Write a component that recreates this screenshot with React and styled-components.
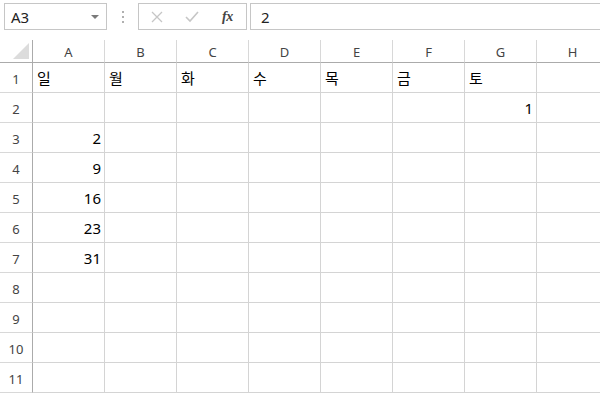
import styled, { createGlobalStyle } from "styled-components"

const GlobalStyle = createGlobalStyle`
  html, body {
    margin: 0;
    padding: 0;
    background: #ffffff;
    overflow: hidden;
  }
  body {
    font-family: "Noto Sans", "Noto Sans CJK KR", sans-serif;
  }
`

const columns = ["A", "B", "C", "D", "E", "F", "G", "H"]

// 셀 값: [행][열]
const data = {
  1: { A: "일", B: "월", C: "화", D: "수", E: "목", F: "금", G: "토" },
  2: { G: 1 },
  3: { A: 2 },
  4: { A: 9 },
  5: { A: 16 },
  6: { A: 23 },
  7: { A: 31 },
}

const rows = [1, 2, 3, 4, 5, 6, 7, 8, 9, 10, 11]

export default function App() {
  return (
    <>
      <GlobalStyle />
      <Page>
        <FormulaBar>
          <NameBox>
            <span>A3</span>
            <Caret />
          </NameBox>
          <Dots>
            <i />
            <i />
            <i />
          </Dots>
          <FuncBox>
            <svg width="12" height="12" viewBox="0 0 12 12">
              <path d="M1 1 L11 11 M11 1 L1 11" stroke="#c6c6c6" strokeWidth="1.3" fill="none" />
            </svg>
            <svg width="14" height="12" viewBox="0 0 14 12">
              <path d="M1 6 L5 10 L13 1" stroke="#c6c6c6" strokeWidth="1.6" fill="none" />
            </svg>
            <Fx>fx</Fx>
          </FuncBox>
          <FormulaInput>2</FormulaInput>
        </FormulaBar>
        <Sheet>
          <Corner>
            <svg width="16" height="16" viewBox="0 0 16 16">
              <polygon points="16,0 16,16 0,16" fill="#dcdcdc" />
            </svg>
          </Corner>
          {columns.map((c) => (
            <ColHeader key={c}>{c}</ColHeader>
          ))}
          {rows.map((r) => (
            <Row key={r} r={r} />
          ))}
        </Sheet>
      </Page>
    </>
  )
}

function Row({ r }) {
  return (
    <>
      <RowHeader>{r}</RowHeader>
      {columns.map((c) => {
        const v = data[r] && data[r][c]
        return (
          <Cell key={c} $number={typeof v === "number"}>
            {v}
          </Cell>
        )
      })}
    </>
  )
}

const Page = styled.div`
  width: 600px;
  height: 400px;
  overflow: hidden;
`

const FormulaBar = styled.div`
  display: flex;
  align-items: center;
  height: 27px;
  padding: 3px 0 0 4px;
`

const NameBox = styled.div`
  height: 25px;
  border: 1px solid #c6c6c6;
  display: flex;
  align-items: center;
  justify-content: space-between;
  padding: 0 7px 0 6px;
  box-sizing: content-box;
  width: 88px;
  font-size: 15px;
  color: #222;
`

const Caret = styled.div`
  width: 0;
  height: 0;
  border-left: 4px solid transparent;
  border-right: 4px solid transparent;
  border-top: 4px solid #7a7a7a;
  margin-top: 1px;
`

const Dots = styled.div`
  width: 31px;
  display: flex;
  flex-direction: column;
  align-items: center;
  gap: 3px;
  i {
    width: 2px;
    height: 2px;
    background: #b0b0b0;
  }
`

const FuncBox = styled.div`
  height: 25px;
  border: 1px solid #c6c6c6;
  display: flex;
  align-items: center;
  padding-left: 12px;
  gap: 22px;
  box-sizing: content-box;
  width: 95px;
`

const Fx = styled.span`
  font-family: "Liberation Serif", serif;
  font-style: italic;
  font-weight: bold;
  font-size: 14px;
  color: #444;
  margin-left: 1px;
  letter-spacing: -0.5px;
`

const FormulaInput = styled.div`
  flex: 1;
  height: 25px;
  margin-left: 3px;
  border: 1px solid #c6c6c6;
  border-right: none;
  display: flex;
  align-items: center;
  padding-left: 10px;
  font-size: 15px;
  color: #222;
`

const Sheet = styled.div`
  display: grid;
  grid-template-columns: 33px repeat(8, 72px);
  grid-template-rows: 23px;
  grid-auto-rows: 30px;
  margin-top: 10px;
`

const Corner = styled.div`
  display: flex;
  align-items: flex-end;
  justify-content: flex-end;
  padding: 0 3px 3px 0;
  border-right: 1px solid #ababab;
  border-bottom: 1px solid #ababab;
  box-sizing: border-box;
`

const ColHeader = styled.div`
  display: flex;
  align-items: center;
  justify-content: center;
  font-size: 13px;
  color: #444;
  border-right: 1px solid #d8d8d8;
  border-bottom: 1px solid #ababab;
  box-sizing: border-box;
  padding-top: 1px;
`

const RowHeader = styled.div`
  display: flex;
  align-items: center;
  justify-content: center;
  font-size: 13px;
  color: #444;
  border-right: 1px solid #ababab;
  border-bottom: 1px solid #d8d8d8;
  box-sizing: border-box;
  padding-top: 2px;
`

const Cell = styled.div`
  display: flex;
  align-items: flex-end;
  justify-content: ${(p) => (p.$number ? "flex-end" : "flex-start")};
  padding: 0 ${(p) => (p.$number ? "3px" : "0")} 4px ${(p) => (p.$number ? "0" : "4px")};
  font-family: "Noto Sans", "Noto Sans CJK KR", sans-serif;
  font-size: 15px;
  line-height: 20px;
  color: #000;
  border-right: 1px solid #d4d4d4;
  border-bottom: 1px solid #d4d4d4;
  box-sizing: border-box;
`
